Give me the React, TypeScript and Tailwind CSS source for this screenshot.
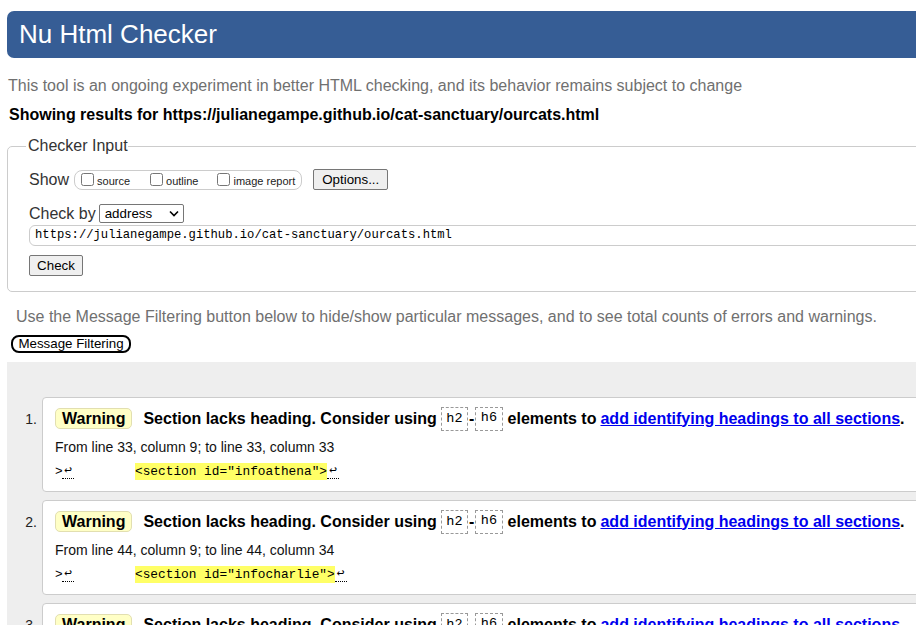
import React from "react";

const mono = "font-['Liberation_Mono','DejaVu_Sans_Mono',monospace]";

function CodeBox({ children }: { children: React.ReactNode }) {
  return (
    <code
      className={`${mono} inline-flex items-center h-[24px] px-[4.5px] border border-dashed border-[#999] text-[13.5px] font-normal text-black align-middle`}
    >
      {children}
    </code>
  );
}

function Item({ n, from, code }: { n: number; from: string; code: string }) {
  return (
    <li className="flex">
      <div className="w-[35px] shrink-0 pr-[5px] text-right text-[14px] leading-[24px] pt-[10px] text-[#222]">
        {n}.
      </div>
      <div className="flex-1 bg-white border border-[#ccc] rounded-l-[4px] pl-[12px] pt-[9px] pb-[10px] h-[95px]">
        <div className="flex items-center h-[24px] text-[16px] font-bold text-black whitespace-nowrap">
          <span className="inline-flex items-center h-[21px] px-[6px] bg-[#ffffc6] border border-[#e2dfb0] rounded-[5px] mr-[11px]">
            Warning
          </span>
          <span>Section lacks heading. Consider using</span>
          <span className="ml-[4px]"><CodeBox>h2</CodeBox></span>
          <span className="mx-[1px]">-</span>
          <CodeBox>h6</CodeBox>
          <span className="ml-[5px]">elements to</span>
          <span className="ml-[4px] text-[#0000ee] underline">add identifying headings to all sections</span>
          <span>.</span>
        </div>
        <div className="mt-[7px] text-[14px] leading-[18px] text-[#111]">{from}</div>
        <div className={`${mono} mt-[7px] text-[12.8px] leading-[17px] text-black whitespace-pre flex items-center`}>
          <span className="inline-block w-[7px]">&gt;</span>
          <span className="inline-block w-[12px] text-center border-b border-dotted border-black leading-[15px]">↩</span>
          <span className="inline-block w-[61px]"></span>
          <mark className="bg-[#ffff66] text-black">{code}</mark>
          <span className="inline-block w-[12px] text-center border-b border-dotted border-black leading-[15px]">↩</span>
        </div>
      </div>
    </li>
  );
}

export default function App() {
  return (
    <div className="w-[916px] h-[625px] overflow-hidden bg-white font-['Liberation_Sans',Arial,sans-serif]">
      <div className="w-[980px]">
        <div className="pt-[11px] pl-[7px]">
          <h1 className="h-[47px] bg-[#365d95] rounded-l-[7px] text-white text-[26px] pl-[12px] flex items-center">
            Nu Html Checker
          </h1>
        </div>
        <p className="mt-[19px] ml-[8px] text-[16px] leading-[18px] text-[#707070]">
          This tool is an ongoing experiment in better HTML checking, and its behavior remains subject to change
        </p>
        <p className="mt-[11px] ml-[9px] text-[16px] leading-[18px] font-bold text-black">
          Showing results for https://julianegampe.github.io/cat-sanctuary/ourcats.html
        </p>

        <fieldset className="mt-[13px] ml-[7px] border border-[#ccc] rounded-[5px] pl-[21px] pb-[14px]">
          <legend className="ml-[-3px] pl-[2px] pr-0 text-[16px] leading-[18px] text-[#333]">Checker Input</legend>
          <div className="mt-[14px] flex items-center h-[21px] text-[#333]">
            <span className="text-[16px] leading-[18px]">Show</span>
            <div className="ml-[5px] flex items-center h-[20px] border border-[#ccc] rounded-[8px] pl-[6px] pr-[6px] text-[11px] text-[#222]">
              <input type="checkbox" className="m-0 w-[13px] h-[13px]" />
              <span className="ml-[3px] mt-[3px]">source</span>
              <input type="checkbox" className="m-0 ml-[20px] w-[13px] h-[13px]" />
              <span className="ml-[3px] mt-[3px]">outline</span>
              <input type="checkbox" className="m-0 ml-[19px] w-[13px] h-[13px]" />
              <span className="ml-[3px] mt-[3px]">image report</span>
            </div>
            <button className="ml-[11px] h-[21px] w-[75px] bg-[#efefef] border border-[#767676] rounded-[2px] text-[13.33px] text-black leading-[16px]">
              Options...
            </button>
          </div>
          <div className="mt-[14px] flex items-center h-[19px] text-[#333]">
            <span className="text-[16px] leading-[18px]">Check by</span>
            <div className="ml-[3px] w-[85px] h-[19px] border border-[#767676] rounded-[2px] flex items-center justify-between pl-[5px] pr-[4px] text-[13.33px] text-black">
              <span>address</span>
              <svg width="10" height="7" viewBox="0 0 10 7">
                <path d="M1 1.5 L5 5.5 L9 1.5" fill="none" stroke="#000" strokeWidth="1.6" />
              </svg>
            </div>
          </div>
          <div className={`mt-[2px] h-[21px] border border-[#ccc] rounded-[6px] flex items-center pl-[5px] ${mono} text-[12.2px] text-black`}>
            https://julianegampe.github.io/cat-sanctuary/ourcats.html
          </div>
          <button className="mt-[9px] h-[21px] w-[54px] bg-[#efefef] border border-[#767676] rounded-[2px] text-[13.33px] text-black leading-[16px]">
            Check
          </button>
        </fieldset>

        <p className="mt-[16px] ml-[16px] text-[16px] leading-[18px] text-[#707070]">
          Use the Message Filtering button below to hide/show particular messages, and to see total counts of errors and warnings.
        </p>
        <button className="mt-[9px] ml-[11px] h-[18px] w-[120px] border-2 border-black rounded-[8px] bg-white text-[13.33px] leading-[14px] text-black flex items-center justify-center">
          Message Filtering
        </button>

        <div className="mt-[9px] ml-[7px] bg-[#eeeeee] pt-[35px] pb-[20px]">
          <ol className="flex flex-col gap-[8px]">
            <Item n={1} from="From line 33, column 9; to line 33, column 33" code={'<section id="infoathena">'} />
            <Item n={2} from="From line 44, column 9; to line 44, column 34" code={'<section id="infocharlie">'} />
            <Item n={3} from="From line 55, column 9; to line 55, column 34" code={'<section id="infomittens">'} />
          </ol>
        </div>
      </div>
    </div>
  );
}
